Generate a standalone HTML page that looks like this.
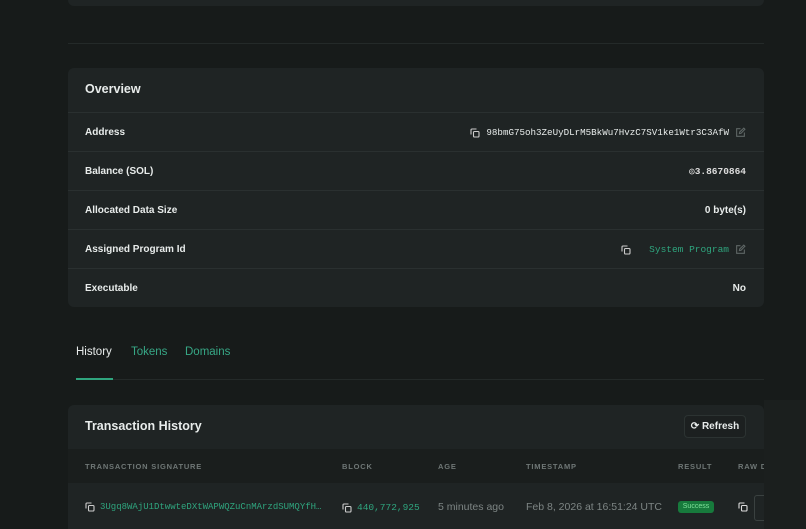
<!DOCTYPE html><html style="overflow:hidden"><head><style>
body{margin:0;width:806px;height:529px;overflow:hidden;background:#171b1a;font-family:"Liberation Sans",sans-serif;color:#e8eceb;position:relative}
.a{position:absolute}
.card{position:absolute;left:68px;width:696px;background:#1f2424;border-radius:6px}
.row{position:absolute;left:0;right:0;height:39px;border-top:1px solid #2a3030;font-size:10px;font-weight:bold}
.row .l{position:absolute;left:17px;top:14px}
.row .r{position:absolute;right:18px;top:14px;display:flex;align-items:center;gap:6px}
.mono{font-family:"Liberation Mono",monospace;font-weight:normal;font-size:9px}
.g{color:#2fa57e}
svg{display:block}
.th{position:absolute;top:13px;font-size:7.5px;letter-spacing:.8px;color:#6f7776;font-weight:bold;white-space:nowrap}
</style></head><body>
<div class="card" style="top:-20px;height:26px"></div>
<div class="a" style="left:68px;width:696px;top:43px;height:1px;background:#242a29"></div>
<div class="card" style="top:68px;height:239px">
 <div class="a" style="left:17px;top:14px;font-size:12.5px;font-weight:bold">Overview</div>
 <div class="row" style="top:44px"><span class="l">Address</span><span class="r mono" style="font-size:9.2px"><svg width="10" height="10" viewBox="0 0 10 10" fill="none" stroke="#ccc" stroke-width="1.1"><rect x="3.5" y="3.5" width="5.5" height="5.5" rx="1"/><path d="M1 6.5V2a1 1 0 0 1 1-1h4.5"/></svg>98bmG75oh3ZeUyDLrM5BkWu7HvzC7SV1ke1Wtr3C3AfW<svg width="11" height="11" viewBox="0 0 10 10" fill="none" stroke="#5e6665" stroke-width="1"><path d="M5 1.5H1.5v7h7V5M4 6l.3-1.5L8 1l1 1-3.5 3.7z"/></svg></span></div>
 <div class="row" style="top:83px"><span class="l">Balance (SOL)</span><span class="r mono" style="color:#ddd;font-size:9.5px;font-weight:bold">◎3.8670864</span></div>
 <div class="row" style="top:122px"><span class="l">Allocated Data Size</span><span class="r">0 byte(s)</span></div>
 <div class="row" style="top:161px"><span class="l">Assigned Program Id</span><span class="r mono" style="font-size:9.5px"><svg width="10" height="10" viewBox="0 0 10 10" fill="none" stroke="#ccc" stroke-width="1.1"><rect x="3.5" y="3.5" width="5.5" height="5.5" rx="1"/><path d="M1 6.5V2a1 1 0 0 1 1-1h4.5"/></svg>&nbsp;<span class="g">System Program</span><svg width="11" height="11" viewBox="0 0 10 10" fill="none" stroke="#5e6665" stroke-width="1"><path d="M5 1.5H1.5v7h7V5M4 6l.3-1.5L8 1l1 1-3.5 3.7z"/></svg></span></div>
 <div class="row" style="top:200px"><span class="l">Executable</span><span class="r">No</span></div>
</div>
<div class="a" style="left:76px;top:346px;font-size:11.5px;color:#e8eceb">History</div>
<div class="a" style="left:131px;top:346px;font-size:11.5px;color:#37a886">Tokens</div>
<div class="a" style="left:185px;top:346px;font-size:11.5px;color:#37a886">Domains</div>
<div class="a" style="left:76px;top:379px;width:688px;height:1px;background:#242a29"></div>
<div class="a" style="left:76px;top:378px;width:37px;height:2px;background:#2fa57e"></div>
<div class="card" style="top:405px;height:124px;overflow:hidden;border-radius:6px 6px 0 0">
 <div class="a" style="left:17px;top:14px;font-size:12.5px;font-weight:bold">Transaction History</div>
 <div class="a" style="left:616px;top:10px;width:60px;height:21px;border:1px solid #2c3332;border-radius:4px;background:#1c2020;font-size:10px;font-weight:bold;line-height:21px;text-align:center">⟳ Refresh</div>
 <div class="a" style="left:0;right:0;top:44px;height:34px;background:#1a1e1d">
  <span class="th" style="left:17px">TRANSACTION SIGNATURE</span><span class="th" style="left:274px">BLOCK</span><span class="th" style="left:370px">AGE</span><span class="th" style="left:458px">TIMESTAMP</span><span class="th" style="left:610px">RESULT</span><span class="th" style="left:670px">RAW DA</span>
 </div>
 <div class="a mono g" style="left:17px;top:97px;display:flex;gap:5px;align-items:center"><svg width="10" height="10" viewBox="0 0 10 10" fill="none" stroke="#ccc" stroke-width="1.1"><rect x="3.5" y="3.5" width="5.5" height="5.5" rx="1"/><path d="M1 6.5V2a1 1 0 0 1 1-1h4.5"/></svg>3Ugq8WAjU1DtwwteDXtWAPWQZuCnMArzdSUMQYfH…</div>
 <div class="a mono g" style="left:274px;top:97px;display:flex;gap:5px;align-items:center;font-size:9.5px"><svg width="10" height="10" viewBox="0 0 10 10" fill="none" stroke="#ccc" stroke-width="1.1"><rect x="3.5" y="3.5" width="5.5" height="5.5" rx="1"/><path d="M1 6.5V2a1 1 0 0 1 1-1h4.5"/></svg>440,772,925</div>
 <div class="a" style="left:370px;top:96px;font-size:10.5px;color:#7d8584">5 minutes ago</div>
 <div class="a" style="left:458px;top:96px;font-size:10.5px;color:#7d8584">Feb 8, 2026 at 16:51:24 UTC</div>
 <div class="a" style="left:610px;top:96px;width:36px;height:12px;background:#177a3c;border-radius:3px;font-size:7px;color:#7fe09a;text-align:center;line-height:12px">Success</div>
 <div class="a" style="left:670px;top:97px"><svg width="10" height="10" viewBox="0 0 10 10" fill="none" stroke="#ddd" stroke-width="1.1"><rect x="3.5" y="3.5" width="5.5" height="5.5" rx="1"/><path d="M1 6.5V2a1 1 0 0 1 1-1h4.5"/></svg></div>
 <div class="a" style="left:686px;top:90px;width:20px;height:24px;border:1px solid #3a4140;border-radius:3px"></div>
</div>
<div class="a" style="left:764px;top:400px;width:42px;height:129px;background:#1b1f1e"></div>
</body></html>
